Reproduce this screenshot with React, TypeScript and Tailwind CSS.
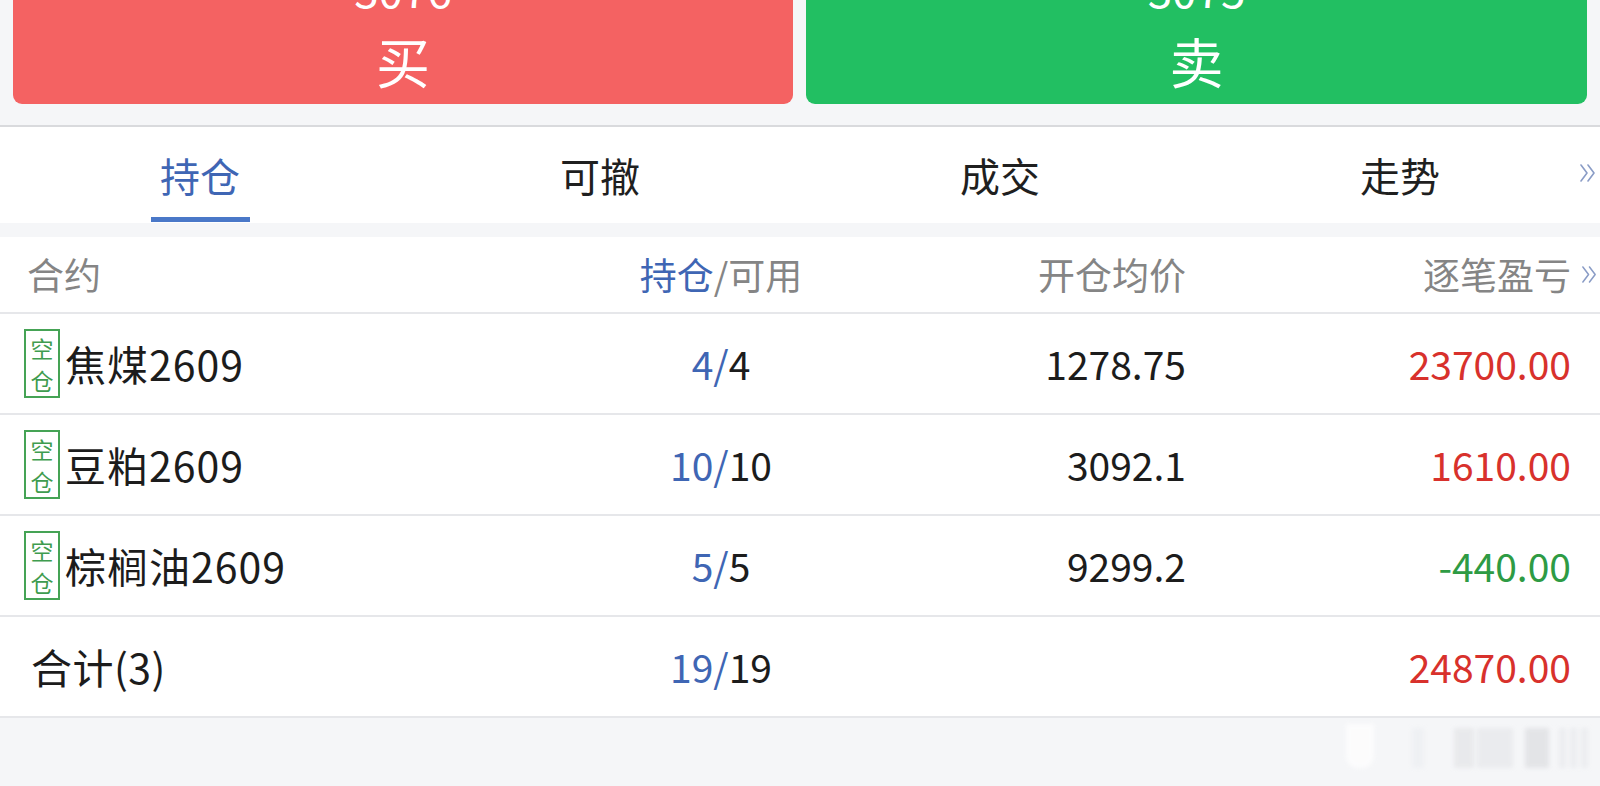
import React from "react";

const font = { fontFamily: '"Noto Sans CJK SC", "Noto Sans", sans-serif' };

function Chevrons({ className }: { className?: string }) {
  return (
    <svg viewBox="0 0 18 20" className={className} fill="none" stroke="#8a9cc6" strokeWidth="1.6" strokeLinecap="round" strokeLinejoin="round">
      <path d="M2 2 L8 10 L2 18" />
      <path d="M9 2 L15 10 L9 18" />
    </svg>
  );
}

function Badge() {
  return (
    <div className="flex h-[69px] w-[36px] shrink-0 flex-col items-center justify-center border-2 border-[#45a355] text-[23px] leading-[32px] text-[#3f9c4f]">
      <span className="block h-[32px]">空</span>
      <span className="block h-[32px]">仓</span>
    </div>
  );
}

type Row = { name: string; pos: string; avail: string; price: string; pnl: string; up: boolean };

const rows: Row[] = [
  { name: "焦煤2609", pos: "4", avail: "4", price: "1278.75", pnl: "23700.00", up: true },
  { name: "豆粕2609", pos: "10", avail: "10", price: "3092.1", pnl: "1610.00", up: true },
  { name: "棕榈油2609", pos: "5", avail: "5", price: "9299.2", pnl: "-440.00", up: false },
];

export default function App() {
  return (
    <div className="relative h-[786px] w-[1600px] overflow-hidden bg-[#f5f6f8]" style={font}>
      {/* buttons */}
      <div className="flex h-[104px] gap-[13px] px-[13px]">
        <div className="flex h-full w-[780px] flex-col items-center overflow-hidden rounded-b-[9px] bg-[#f46262] text-white">
          <div className="mt-[-33px] text-[44px] leading-[44px]">3076</div>
          <div className="mt-[23px] text-[54px] leading-[54px]">买</div>
        </div>
        <div className="flex h-full w-[781px] flex-col items-center overflow-hidden rounded-b-[9px] bg-[#22bf62] text-white">
          <div className="mt-[-33px] text-[44px] leading-[44px]">3075</div>
          <div className="mt-[23px] text-[54px] leading-[54px]">卖</div>
        </div>
      </div>

      {/* tabs */}
      <div className="relative mt-[21px] flex h-[98px] border-t-2 border-[#d9dadd] bg-white">
        <div className="relative flex w-[400px] items-center justify-center text-[40px] text-[#3f66b4]">
          <span>持仓</span>
          <div className="absolute bottom-[1px] left-[151px] h-[5px] w-[99px] bg-[#4a78c8]" />
        </div>
        <div className="flex w-[400px] items-center justify-center text-[40px] text-[#1f1f1f]">
          <span>可撤</span>
        </div>
        <div className="flex w-[400px] items-center justify-center text-[40px] text-[#1f1f1f]">
          <span>成交</span>
        </div>
        <div className="flex w-[400px] items-center justify-center text-[40px] text-[#1f1f1f]">
          <span>走势</span>
        </div>
        <Chevrons className="absolute left-[1579px] top-[36px] h-[20px] w-[18px]" />
      </div>

      {/* table */}
      <div className="mt-[14px] bg-white">
        <div className="flex h-[77px] items-center border-b-2 border-[#e6e7ea] pl-[27px] text-[37px] text-[#858585]">
          <div className="w-[549px]">合约</div>
          <div className="w-[290px] text-center">
            <span className="text-[#3f66b4]">持仓</span>/可用
          </div>
          <div className="w-[320px] text-right">开仓均价</div>
          <div className="w-[385px] text-right">逐笔盈亏</div>
          <Chevrons className="ml-[10px] h-[21px] w-[17px]" />
        </div>

        {rows.map((r) => (
          <div key={r.name} className="flex h-[101px] items-center border-b-2 border-[#e6e7ea] pl-[24px] text-[39px] text-[#1c1c1c]">
            <div className="flex w-[552px] items-center gap-[5px]">
              <Badge />
              <span className="text-[41px] tracking-[1px]">{r.name}</span>
            </div>
            <div className="w-[290px] text-center">
              <span className="text-[#3f66b4]">{r.pos}/</span>
              {r.avail}
            </div>
            <div className="w-[320px] text-right">{r.price}</div>
            <div className={`w-[385px] text-right ${r.up ? "text-[#d8312c]" : "text-[#2e9b44]"}`}>{r.pnl}</div>
          </div>
        ))}

        <div className="flex h-[101px] items-center border-b-2 border-[#e6e7ea] pl-[31px] text-[39px] text-[#1c1c1c]">
          <div className="w-[545px] text-[41px] tracking-[0.5px]">合计(3)</div>
          <div className="w-[290px] text-center">
            <span className="text-[#3f66b4]">19/</span>19
          </div>
          <div className="w-[320px]" />
          <div className="w-[385px] text-right text-[#d8312c]">24870.00</div>
        </div>
      </div>

      {/* faint watermark */}
      <div className="absolute left-[1346px] top-[724px] flex h-[44px] items-end opacity-70 blur-[2px]">
        <div className="h-[44px] w-[28px] rounded-b-[12px] bg-white" />
        <div className="ml-[38px] h-[40px] w-[12px] bg-[#eceef1]" />
        <div className="ml-[30px] h-[40px] w-[20px] bg-[#e3e4e7]" />
        <div className="ml-[3px] h-[40px] w-[36px] bg-[#e6e7ea]" />
        <div className="ml-[12px] h-[40px] w-[24px] bg-[#dcdde0]" />
        <div className="ml-[10px] h-[40px] w-[7px] bg-[#e8e9ec]" />
        <div className="ml-[4px] h-[40px] w-[7px] bg-[#e8e9ec]" />
        <div className="ml-[4px] h-[40px] w-[7px] bg-[#e8e9ec]" />
      </div>
    </div>
  );
}
